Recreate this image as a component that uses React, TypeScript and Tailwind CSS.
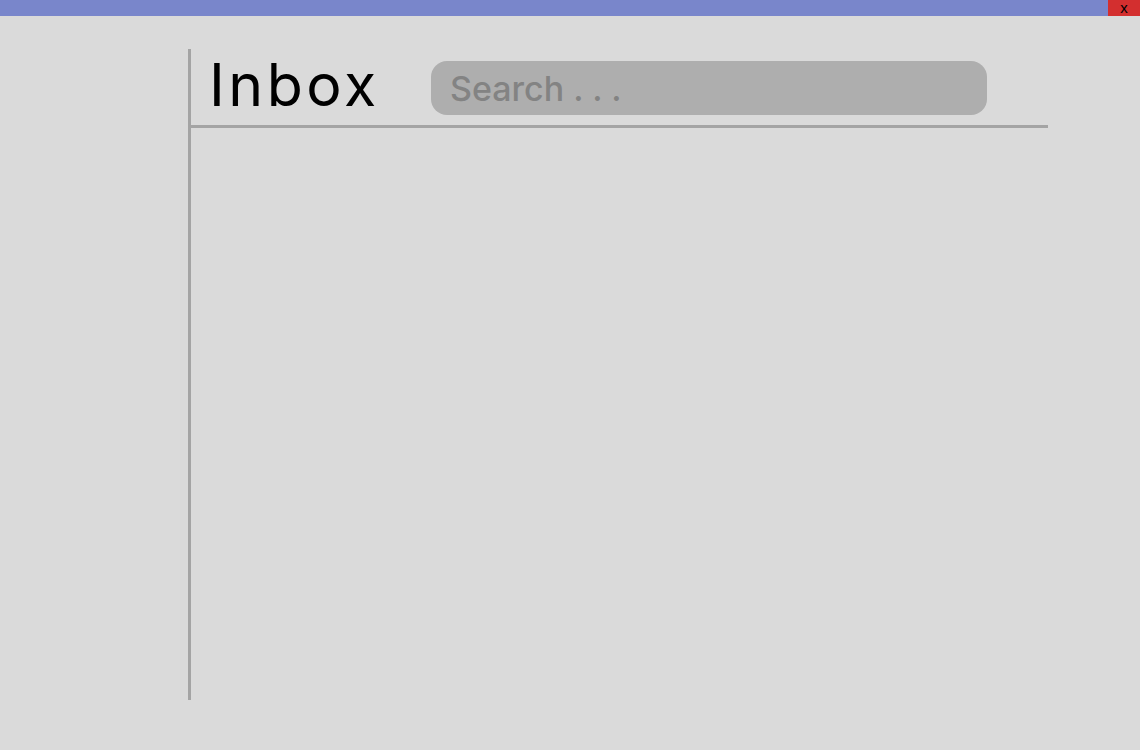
export default function App() {
  return (
    <div className="w-full h-[750px] bg-[#dadada] flex flex-col font-['Inter',sans-serif]">
      <div className="h-4 bg-[#7986cb] flex justify-end">
        <button className="w-8 h-4 bg-[#d32f2f] text-black text-[15px] leading-4 font-['Liberation_Sans',sans-serif]">
          x
        </button>
      </div>
      <div className="pl-[188px] pt-[33px]">
        <div className="w-[860px] h-[651px] border-l-[3px] border-[#a4a4a4] flex flex-col">
          <div className="h-[79px] border-b-[3px] border-[#a4a4a4] flex items-start">
            <div className="w-[240px] pl-[18px]">
              <h1 className="mt-[1px] text-[59px] leading-[70px] text-black font-normal tracking-[3.5px]">Inbox</h1>
            </div>
            <div className="mt-[12px] w-[556px] h-[54px] rounded-[16px] bg-[#aeaeae] flex items-center px-[19px]">
              <input
                className="w-full bg-transparent outline-none text-[34px] font-medium text-[#838383] placeholder:text-[#838383]"
                placeholder="Search . . ."
              />
            </div>
          </div>
        </div>
      </div>
    </div>
  );
}
